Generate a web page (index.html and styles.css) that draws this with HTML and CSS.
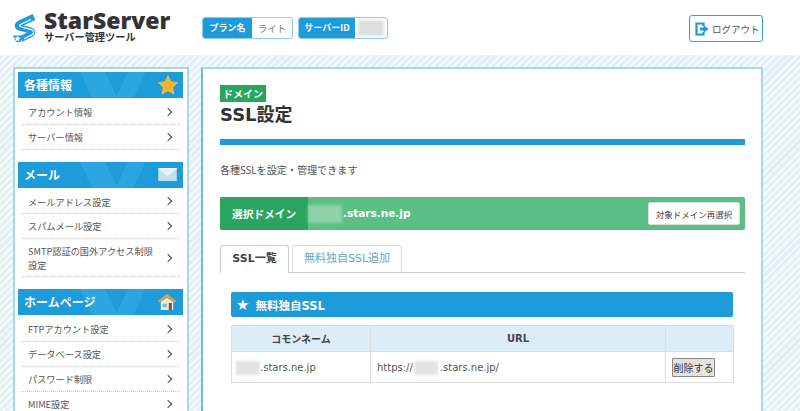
FILE: index.html
```html
<!DOCTYPE html>
<html lang="ja">
<head>
<meta charset="utf-8">
<title>SSL設定</title>
<link rel="stylesheet" href="styles.css">
</head>
<body>
<header class="top">
  <div class="logo">
    <svg class="logo-mark" width="24" height="28" viewBox="0 0 24 28"><path d="M21 3 L6 10 Q3.500 12 6.500 13.500 L17.500 16.500 Q20.500 18 18 20 L8 25" fill="none" stroke="#1e9bd9" stroke-width="6.400" stroke-linejoin="round"/><path d="M18 5.500 L7.500 10.500 Q5.500 12 8 12.800 L18.500 15.500 Q22.500 17.500 19.500 20.500 L11 24.800" fill="none" stroke="#fff" stroke-width="1.300"/><path d="M0 21.500 H8 V28 H3 Z" fill="#1e9bd9"/><path d="M4.500 21.500 L5.400 23.600 L7.700 23.800 L5.900 25.300 L6.500 27.500 L4.500 26.300 L2.500 27.500 L3.100 25.300 L1.300 23.800 L3.600 23.600 Z" fill="#fff"/></svg>
    <div class="logo-text">
      <div class="logo-name">StarServer</div>
      <div class="logo-sub">サーバー管理ツール</div>
    </div>
  </div>
  <div class="chip chip-plan"><span class="chip-key">プラン名</span><span class="chip-val">ライト</span></div>
  <div class="chip chip-id"><span class="chip-key">サーバーID</span><span class="chip-val chip-val-id"><span class="mask mask-id"></span></span></div>
  <a class="logout">
    <svg width="14" height="14" viewBox="0 0 14 14"><path d="M8.500 4 V1.500 H1.500 V12.500 H8.500 V10" fill="none" stroke="#1e9bd9" stroke-width="2.200"/><path d="M5 5.500 H8.500 V3 L13.500 7 L8.500 11 V8.500 H5 Z" fill="#1e9bd9"/></svg>
    <span class="logout-text">ログアウト</span>
  </a>
</header>
<div class="page">
  <aside class="side">
    <section class="group">
      <h2 class="group-head"><span>各種情報</span>
        <svg class="ico-star" width="20" height="20" viewBox="0 0 22 22"><path d="M11 0.500 L14.200 7.600 L21.800 8.400 L16.100 13.500 L17.700 21 L11 17.200 L4.300 21 L5.900 13.500 L0.200 8.400 L7.800 7.600 Z" fill="#fbb321" stroke="#f7d774" stroke-width="0.600"/></svg>
      </h2>
      <ul class="menu">
        <li>アカウント情報</li>
        <li>サーバー情報</li>
      </ul>
    </section>
    <section class="group">
      <h2 class="group-head"><span>メール</span>
        <svg width="19" height="13" viewBox="0 0 20 14"><rect width="20" height="14" fill="#bfe0ec"/><path d="M0 0 L10 8 L20 0 Z" fill="#e6f3f8" stroke="#fff" stroke-width="0.800"/></svg>
      </h2>
      <ul class="menu">
        <li>メールアドレス設定</li>
        <li>スパムメール設定</li>
        <li>SMTP認証の国外アクセス制限設定</li>
      </ul>
    </section>
    <section class="group">
      <h2 class="group-head"><span>ホームページ</span>
        <svg width="20" height="16" viewBox="0 0 21 18"><path d="M10.500 0 L21 8 L19 9.500 L10.500 3 L2 9.500 L0 8 Z" fill="#f39a3c"/><path d="M3.500 9 L10.500 3.800 L17.500 9 V18 H3.500 Z" fill="#f3ead6"/><rect x="12.500" y="10" width="3.500" height="8" fill="#7b5a3c"/><rect x="5.500" y="11" width="5" height="4" fill="#8fbcd0"/></svg>
      </h2>
      <ul class="menu">
        <li>FTPアカウント設定</li>
        <li>データベース設定</li>
        <li>パスワード制限</li>
        <li>MIME設定</li>
      </ul>
    </section>
  </aside>
  <main class="main">
    <span class="tag">ドメイン</span>
    <h1 class="title">SSL設定</h1>
    <p class="lead">各種SSLを設定・管理できます</p>
    <div class="domain-bar">
      <div class="domain-key">選択ドメイン</div>
      <div class="domain-val"><span class="mask mask-domain"></span>.stars.ne.jp</div>
      <button class="domain-btn" type="button">対象ドメイン再選択</button>
    </div>
    <nav class="tabs">
      <a class="tab tab-on">SSL一覧</a>
      <a class="tab tab-off">無料独自SSL追加</a>
    </nav>
    <div class="panel">
      <h3 class="panel-head"><span class="panel-star">★</span>無料独自SSL</h3>
      <table class="list">
        <thead>
          <tr><th class="col-name">コモンネーム</th><th class="col-url">URL</th><th class="col-act"></th></tr>
        </thead>
        <tbody>
          <tr>
            <td class="cell-name"><span class="mask mask-cell"></span>.stars.ne.jp</td>
            <td class="cell-url">https://<span class="mask mask-cell mask-url"></span>.stars.ne.jp/</td>
            <td class="cell-act"><button class="del" type="button">削除する</button></td>
          </tr>
        </tbody>
      </table>
    </div>
  </main>
</div>
</body>
</html>
```
FILE: styles.css
```css
* { box-sizing: border-box; }
html, body { margin: 0; height: 411px; overflow: hidden; }
body {
  font-family: "DejaVu Sans", "Noto Sans CJK JP", sans-serif;
  font-size: 10px;
  color: #444;
  background: #fff;
}
.top {
  height: 55px;
  display: flex;
  align-items: flex-start;
  background: #fff;
}
.logo { display: flex; margin: 10px 0 0 13px; width: 189px; }
.logo-mark { margin: 4px 7px 0 0; flex: none; }
.logo-name {
  font-family: "Open Sans", sans-serif;
  font-weight: 800;
  font-size: 23px;
  line-height: 21px;
  letter-spacing: 0;
  color: #333;
}
.logo-sub {
  font-family: "Noto Sans CJK JP", sans-serif;
  font-weight: 700;
  font-size: 10.200px;
  line-height: 12px;
  color: #333;
}
.chip {
  display: flex;
  height: 22px;
  margin-top: 17px;
  border: 1px solid #8ccbea;
  border-radius: 3px;
  overflow: hidden;
  font-family: "Noto Sans CJK JP", sans-serif;
  font-size: 9px;
  line-height: 20px;
}
.chip-plan { width: 91px; }
.chip-id { width: 90px; margin-left: 5px; }
.chip-key { background: #1e9bd9; color: #fff; font-weight: 700; text-align: center; }
.chip-plan .chip-key { width: 49px; }
.chip-id .chip-key { width: 56px; }
.chip-val { flex: 1; text-align: center; color: #777; font-size: 9.500px; }
.chip-val-id { display: flex; justify-content: center; align-items: center; }
.mask { display: inline-block; background: #dcdedf; filter: blur(1.5px); vertical-align: middle; }
.mask-id { width: 26px; height: 16px; }
.logout {
  display: flex;
  align-items: center;
  gap: 3px;
  width: 74px;
  height: 27px;
  margin: 15px 37px 0 auto;
  padding-left: 5px;
  border: 1px solid #3a9fd4;
  border-radius: 3px;
  font-family: "Noto Sans CJK JP", sans-serif;
  font-size: 9.500px;
  color: #555;
}
.logout-text { white-space: nowrap; }
.page {
  height: 356px;
  display: flex;
  align-items: flex-start;
  gap: 12px;
  padding: 12px 37px 0 13px;
  overflow: hidden;
  background: repeating-linear-gradient(135deg, #e3f1f7 0 3px, #f7fbfd 3px 5px);
}
.side {
  width: 176px;
  flex: none;
  height: 344px;
  padding: 3px 4px 0 3px;
  background: #fff;
  border: 2px solid #a7d7ec;
  border-bottom: 0;
  overflow: hidden;
}
.group { margin-bottom: 12px; }
.group-head {
  display: flex;
  justify-content: space-between;
  align-items: center;
  height: 26px;
  margin: 0;
  padding: 0 6px;
  background:
    linear-gradient(115deg, transparent 0 62%, #2ba6e0 62% 72%, transparent 72%),
    linear-gradient(65deg, transparent 0 42%, #2ba6e0 42% 56%, transparent 56%),
    #1e9bd9;
  color: #fff;
  font-family: "Noto Sans CJK JP", sans-serif;
  font-size: 12px;
  line-height: 24px;
  font-weight: 700;
}
.ico-star { margin-right: -1px; }
.menu { list-style: none; margin: 0; padding: 2px 3px 0; }
.menu li {
  position: relative;
  padding: 6px 24px 4.300px 7px;
  line-height: 13.500px;
  font-size: 9.200px;
  font-family: "Noto Sans CJK JP", sans-serif;
  color: #555;
  border-bottom: 1px dotted #c9c9c9;
}
.menu li::after {
  content: "";
  position: absolute;
  right: 9px;
  top: 50%;
  width: 5px;
  height: 5px;
  margin-top: -3px;
  border: solid #444;
  border-width: 1px 1px 0 0;
  transform: rotate(45deg);
}
.main {
  width: 562px;
  flex: none;
  height: 344px;
  padding: 16px 16px 0 17px;
  background: #fff;
  border: 2px solid #a7d7ec;
  border-left-color: #6fb8dc;
  border-bottom: 0;
  overflow: hidden;
}
.tag {
  display: block;
  width: 46px;
  height: 17px;
  background: #2aa55f;
  color: #fff;
  font-family: "Noto Sans CJK JP", sans-serif;
  font-size: 10px;
  font-weight: 700;
  line-height: 17px;
  text-align: center;
}
.title {
  height: 43px;
  margin: 0;
  padding-top: 1px;
  border-bottom: 6px solid #1e9bd9;
  font-size: 18px;
  line-height: 24px;
  font-weight: 700;
  color: #333;
}
.lead {
  margin: 18px 0 0;
  line-height: 14px;
  font-family: "Noto Sans", "Noto Sans CJK JP", sans-serif;
  font-size: 10.100px;
  color: #555;
}
.domain-bar {
  display: flex;
  align-items: center;
  height: 33px;
  margin-top: 20px;
  background: #5bbf85;
  border-radius: 2px;
  overflow: hidden;
  color: #fff;
  font-weight: 700;
}
.domain-key {
  width: 88px;
  height: 33px;
  line-height: 33px;
  padding-left: 12px;
  background: #2aa55f;
  font-family: "Noto Sans CJK JP", sans-serif;
  font-size: 10.700px;
}
.domain-val { flex: 1; font-size: 10.500px; }
.mask-domain { width: 34px; height: 18px; margin-right: 1px; background: #8fd2aa; }
.domain-btn {
  width: 92px;
  height: 23px;
  margin-right: 5px;
  padding: 0;
  background: #fff;
  border: 1px solid #ddd;
  border-radius: 2px;
  font-family: "Noto Sans CJK JP", sans-serif;
  font-size: 8.500px;
  color: #444;
}
.tabs {
  display: flex;
  gap: 3px;
  height: 28px;
  margin-top: 15px;
  border-bottom: 1px solid #ccc;
}
.tab {
  height: 27px;
  line-height: 26px;
  text-align: center;
  border: 1px solid #ddd;
  border-bottom: 0;
  border-radius: 3px 3px 0 0;
  font-size: 11px;
}
.tab-on { width: 69px; font-weight: 700; color: #444; height: 28px; background: #fff; border-color: #ccc; }
.tab-off { width: 110px; color: #68a6cc; }
.panel { margin: 19px 12px 0 11px; }
.panel-head {
  display: flex;
  align-items: center;
  height: 25px;
  margin: 0;
  padding-left: 5px;
  background: #1e9bd9;
  border-radius: 2px;
  color: #fff;
  font-size: 11.500px;
  font-weight: 700;
}
.panel-star { font-size: 15px; margin-right: 6px; }
.list {
  width: 502px;
  margin-top: 8px;
  border-collapse: collapse;
  table-layout: fixed;
}
.list th, .list td { border: 1px solid #ddd; font-size: 10px; padding: 0; }
.list th {
  height: 26px;
  background: #dcedf8;
  color: #444;
  font-weight: 700;
  text-align: center;
}
.list td { height: 31px; padding-top: 1px; color: #555; }
.col-name { width: 139px; }
.col-url { width: 295px; }
.col-act { width: 68px; }
.mask-cell { width: 24px; height: 14px; background: #e2e2e2; }
.list .cell-name { padding-left: 4px; }
.list .cell-url { padding-left: 6px; }
.mask-url { margin: 0 2px 0 1px; }
.list .cell-act { padding: 0 0 0 6px; }
.del {
  display: block;
  width: 43px;
  height: 19px;
  padding: 0;
  background: #e4e4e4;
  border: 1px solid #888;
  border-radius: 1px;
  font-family: "Noto Sans CJK JP", sans-serif;
  font-size: 10px;
  color: #333;
}
```
